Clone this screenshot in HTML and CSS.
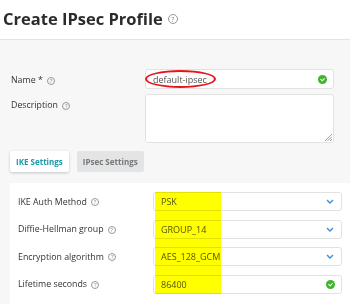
FILE: index.html
```html
<!DOCTYPE html>
<html lang="en">
<head>
    <meta charset="UTF-8">
    <title>Create IPsec Profile</title>
    <link rel="stylesheet" href="styles.css">
</head>
<body>
    <!-- page title -->
    <div class="page-head">
        <h1 class="page-title">Create IPsec Profile</h1>
        <span class="help help-big">?</span>
    </div>

    <div class="page-body">
        <div class="form-row">
            <label class="form-label">Name * <span class="help">?</span></label>
            <div class="field">
                <span class="field-text">default-ipsec</span>
                <span class="ok-dot"></span>
                <span class="mark-ring"></span>
            </div>
        </div>
        <div class="form-row">
            <label class="form-label">Description <span class="help">?</span></label>
            <div class="field area">
                <svg class="grip" width="7" height="7" viewBox="0 0 7 7">
                    <path d="M7 0 L0 7 M7 2.5 L2.5 7 M7 5 L5 7" stroke="#888" stroke-width="0.8"/>
                </svg>
            </div>
        </div>

        <!-- tabs -->
        <div class="tabs">
            <span class="tab active">IKE Settings</span>
            <span class="tab">IPsec Settings</span>
        </div>

        <div class="panel">
            <div class="panel-row">
                <label class="form-label">IKE Auth Method <span class="help">?</span></label>
                <div class="field select">
                    <span class="field-text">PSK</span>
                    <svg class="chev" width="8" height="5" viewBox="0 0 8 5"><path d="M1 1 L4 4 L7 1" fill="none" stroke="#3b8ee0" stroke-width="1.4"/></svg>
                </div>
            </div>
            <div class="panel-row">
                <label class="form-label">Diffie-Hellman group <span class="help">?</span></label>
                <div class="field select">
                    <span class="field-text">GROUP_14</span>
                    <svg class="chev" width="8" height="5" viewBox="0 0 8 5"><path d="M1 1 L4 4 L7 1" fill="none" stroke="#3b8ee0" stroke-width="1.4"/></svg>
                </div>
            </div>
            <div class="panel-row">
                <label class="form-label">Encryption algorithm <span class="help">?</span></label>
                <div class="field select">
                    <span class="field-text">AES_128_GCM</span>
                    <svg class="chev" width="8" height="5" viewBox="0 0 8 5"><path d="M1 1 L4 4 L7 1" fill="none" stroke="#3b8ee0" stroke-width="1.4"/></svg>
                </div>
            </div>
            <div class="panel-row">
                <label class="form-label">Lifetime seconds <span class="help">?</span></label>
                <div class="field select">
                    <span class="field-text">86400</span>
                    <span class="ok-dot"></span>
                </div>
            </div>
            <!-- yellow marker over the values -->
            <div class="highlight"></div>
        </div>
    </div>
</body>
</html>
```

FILE: styles.css
```css
* {
    box-sizing: border-box;
}
body {
    margin: 0;
    font-family: 'Open Sans', 'Noto Sans', sans-serif;
    background: #f7f7f7;
    color: #333;
}
.page-head {
    height: 40px;
    background: #fff;
    border-bottom: 1px solid #e4e4e4;
    display: flex;
    align-items: center;
    padding: 0 0 2px 3px;
}
.page-title {
    margin: 0;
    font-size: 16.5px;
    font-weight: 700;
    color: #2b2b2b;
}
.help {
    display: inline-flex;
    justify-content: center;
    align-items: center;
    width: 8px;
    height: 8px;
    border: 1px solid #999;
    border-radius: 50%;
    font-size: 6px;
    color: #888;
    line-height: 1;
    margin-left: 2px;
    vertical-align: middle;
}
.help-big {
    width: 10px;
    height: 10px;
    font-size: 7px;
    margin-left: 5px;
    margin-top: 1px;
}
.page-body {
    padding: 29px 0 0 10px;
}
.form-row {
    display: flex;
    align-items: flex-start;
    margin-bottom: 5px;
}
.form-row .form-label {
    width: 135px;
    padding: 5px 0 0 1px;
}
.form-label {
    font-size: 8.8px;
    color: #333;
    flex-shrink: 0;
}
.field {
    position: relative;
    width: 189px;
    height: 20px;
    background: #fff;
    border: 1px solid #e2e2e2;
    border-radius: 3px;
    display: flex;
    align-items: center;
    justify-content: space-between;
    padding: 0 6px 0 7px;
}
.field-text {
    font-size: 9px;
    color: #555;
}
.field.area {
    height: 49px;
    align-items: flex-end;
    justify-content: flex-end;
    padding: 0 1px 1px 0;
}
.ok-dot {
    width: 9px;
    height: 9px;
    border-radius: 50%;
    background: #3fb52b;
    position: relative;
}
.ok-dot::after {
    content: "";
    position: absolute;
    left: 3px;
    top: 2px;
    width: 2px;
    height: 3px;
    border: solid #fff;
    border-width: 0 1px 1px 0;
    transform: rotate(45deg);
}
.mark-ring {
    position: absolute;
    left: -1px;
    top: 0;
    width: 71px;
    height: 18px;
    border: 2px solid #e8141b;
    border-radius: 50%;
}
.tabs {
    display: flex;
    gap: 8px;
    margin-top: 8px;
}
.tab {
    height: 21px;
    display: flex;
    align-items: center;
    padding: 0 6px;
    font-size: 8px;
    font-weight: 700;
    color: #777;
    background: #e2e4e6;
    border-radius: 2px;
}
.tab.active {
    background: #fff;
    color: #1b9aa8;
    box-shadow: 0 1px 3px rgba(0, 0, 0, 0.2);
}
.panel {
    position: relative;
    margin-top: 11px;
    background: #fff;
    padding: 9px 0 14px 8px;
    display: flex;
    flex-direction: column;
    gap: 8.5px;
}
.panel-row {
    display: flex;
    align-items: center;
}
.panel-row .form-label {
    width: 135px;
}
.field.select {
    height: 19px;
    padding-right: 6px;
}
.chev {
    margin-right: 1px;
}
.highlight {
    position: absolute;
    left: 145px;
    top: 9px;
    width: 66px;
    height: 102px;
    background: #ffff00;
    mix-blend-mode: multiply;
}
```
